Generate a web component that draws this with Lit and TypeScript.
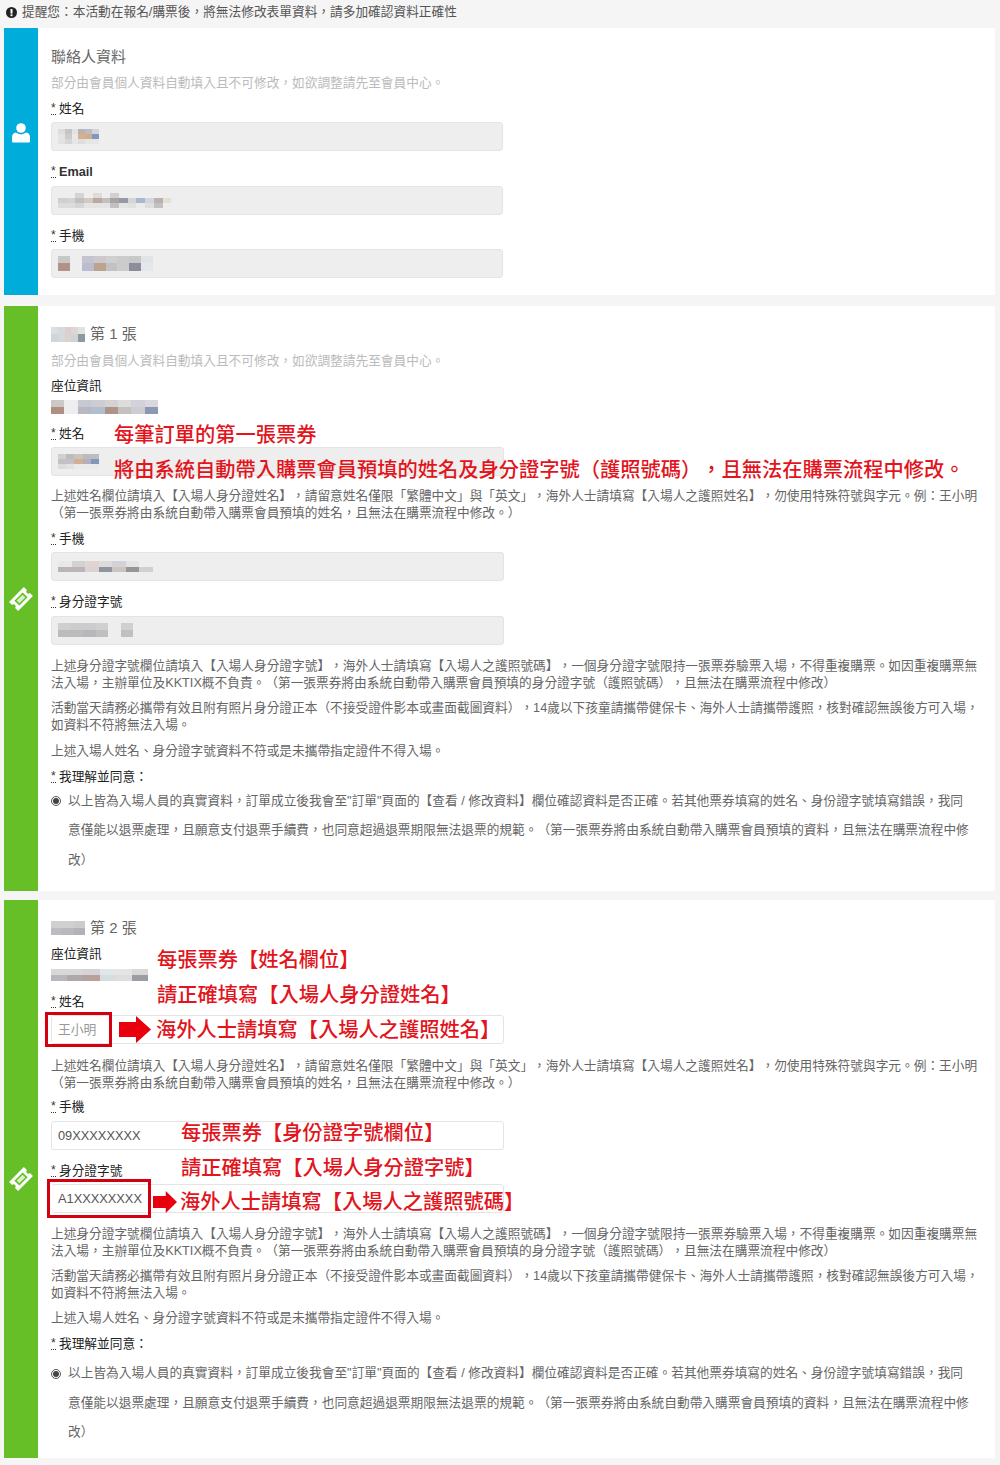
import { LitElement, html, css, svg } from "lit";
import { customElement } from "lit/decorators.js";

type Cells = string[][];

const M = {
  name1: [["#dcdcdc","#c4c4c4","#e2e2e2","#b8b4b2","#bcbcc2","#d4d4d4"],["#e4e4e4","#cccccc","#e8e8e8","#d8b08c","#ccae90","#7f98c0"],["#e2e2e2","#d6d6d6","#e6e6e6","#dedede","#e6e6e6","#e6e6e6"]],
  email: [["#eeeeee","#eeeeee","#d4d4d4","#eeeeee","#e2dad4","#eeeeee","#d0d0d0","#eeeeee","#eeeeee","#eeeeee","#eeeeee","#eeeeee","#eeeeee","#eeeeee"],["#cfcfcf","#d4d4d4","#c4bfbd","#d4c8c2","#b8aaa2","#c4bebe","#a8a4a4","#9898a2","#d4d4d4","#a8b8cc","#d0d6da","#b8b2b2","#e4dfd0","#eaeef0"],["#dcdcdc","#dcdcdc","#d4d4d4","#e4e4e4","#e4e4e4","#e4e4e4","#c4c0c0","#e4e4e4","#e0e0e0","#ebebeb","#dedede","#c4c0c0","#eeeeee","#eeeeee"]],
  phone: [["#c8c8c8","#eeeeee","#c4c4ce","#ccc8cc","#d0d0d0","#cccccc","#c8c8c8","#e0e4e4"],["#ae9484","#eeeeee","#bcbcd0","#bca390","#c4c0c4","#cccccc","#8c8c9a","#e4e8ea"]],
  title1: [["#dcdfe2","#d6dadc","#dccfcc","#ded6d4","#e2e2e2"],["#ccd6dc","#d4dadc","#d8d2d0","#d2d2d2","#8c98a2"]],
  seat1: [["#ccc8c6","#eeeeee","#c8c8d2","#ccccd2","#d6d2d2","#dcdcdc","#d2d2da","#d8d8de"],["#ae8f82","#eeeeee","#b8b8c2","#b0bed0","#ac9488","#c4c0be","#ccccd2","#8a98b4"]],
  name2: [["#d0d0d0","#bcbcbc","#cac4c0","#bcbaba","#bcbcc2"],["#c4c0c4","#c4c0ca","#d4ae92","#b0b0c0","#7e98bc"],["#dcdcdc","#e2e2e2","#eaeaea","#eaeaea","#eaeaea"]],
  phone2: [["#e8e8e8","#d2d2d2","#e2d4d0","#dcdcdc","#d2d2d8","#e4e4e4","#eeeeee"],["#bcb4b8","#bcb4b8","#d8d4d4","#90949e","#ccc4c0","#989494","#d0d0d4"]],
  id2: [["#cfcfcf","#cccccc","#cccccc","#d0d0d0","#eeeeee","#d0d0d0"],["#bcbcc0","#bcbcbc","#b8b8bc","#c0c0c0","#eeeeee","#c0c0c4"]],
  title2: [["#d0d0d0","#d0d0d0","#cccccc"],["#bcbcc2","#b8b8be","#b2b2b8"]],
  seat2: [["#d8d8d8","#d8d8d8","#d4d4d4","#e2e6e8","#e4e4e4","#d8d8d8"],["#b8b8bc","#aca8ac","#b8a09c","#d4dee2","#dedede","#9c9ca6"]],
} as Record<string, Cells>;

const HELP_NAME = "上述姓名欄位請填入【入場人身分證姓名】，請留意姓名僅限「繁體中文」與「英文」，海外人士請填寫【入場人之護照姓名】，勿使用特殊符號與字元。例：王小明（第一張票券將由系統自動帶入購票會員預填的姓名，且無法在購票流程中修改。）";
const HELP_ID = "上述身分證字號欄位請填入【入場人身分證字號】，海外人士請填寫【入場人之護照號碼】，一個身分證字號限持一張票券驗票入場，不得重複購票。如因重複購票無法入場，主辦單位及KKTIX概不負責。（第一張票券將由系統自動帶入購票會員預填的身分證字號（護照號碼），且無法在購票流程中修改）";
const HELP_DAY = "活動當天請務必攜帶有效且附有照片身分證正本（不接受證件影本或畫面截圖資料），14歲以下孩童請攜帶健保卡、海外人士請攜帶護照，核對確認無誤後方可入場，如資料不符將無法入場。";
const HELP_DENY = "上述入場人姓名、身分證字號資料不符或是未攜帶指定證件不得入場。";
const AGREE = "以上皆為入場人員的真實資料，訂單成立後我會至\"訂單\"頁面的【查看 / 修改資料】欄位確認資料是否正確。若其他票券填寫的姓名、身份證字號填寫錯誤，我同意僅能以退票處理，且願意支付退票手續費，也同意超過退票期限無法退票的規範。（第一張票券將由系統自動帶入購票會員預填的資料，且無法在購票流程中修改）";
const SUB = "部分由會員個人資料自動填入且不可修改，如欲調整請先至會員中心。";

const userIcon = svg`<svg class="ico-user" viewBox="0 0 18 20"><circle cx="9" cy="5" r="4.8" fill="#fff"/><path d="M1 19.6Q0 19.6 0 18V14.5Q0 10.2 4 9.6Q6 11.4 9 11.4T14 9.6Q18 10.2 18 14.5V18Q18 19.6 17 19.6Z" fill="#fff"/></svg>`;
const ticketIcon = svg`<svg class="ico-ticket" viewBox="0 0 24 24"><g transform="rotate(-45 12 12)"><path fill="#fff" d="M3 6.5H21V10.2A1.8 1.8 0 0 0 21 13.8V17.5H3V13.8A1.8 1.8 0 0 0 3 10.2Z"/><rect x="7" y="9" width="10" height="6" fill="#66bf26"/><rect x="8.4" y="10.3" width="7.2" height="3.4" fill="#d8efc8"/></g></svg>`;
const arrow = svg`<svg viewBox="0 0 32 27" preserveAspectRatio="none"><path fill="#e8000d" d="M0 6H17V0L32 13.5L17 27V21H0Z"/></svg>`;

@customElement("app-root")
export class AppRoot extends LitElement {
  static styles = css`
    :host { display: block; width: 1000px; height: 1465px; background: #f5f5f5; overflow: hidden;
      font-family: "Liberation Sans", "Noto Sans CJK TC", sans-serif; font-size: 12.7px; line-height: 17px; color: #666; text-spacing-trim: space-all; }
    .notice { height: 28px; display: flex; align-items: center; gap: 5px; padding-left: 6px; box-sizing: border-box; color: #555; padding-bottom: 4px; }
    .notice svg { width: 11px; height: 11px; flex: none; }
    .cards { display: flex; flex-direction: column; margin: 0 5px 0 4px; }
    .card { position: relative; display: flex; background: #fff; }
    .c1 { height: 267px; margin-bottom: 11px; }
    .c2 { height: 585px; margin-bottom: 9px; }
    .c3 { height: 558px; }
    .side { width: 34px; flex: none; display: flex; align-items: center; justify-content: center; background: #66bf26; }
    .c1 .side { background: #00acd9; padding-bottom: 58px; box-sizing: border-box; }
    .ico-user { width: 18px; height: 20px; }
    .ico-ticket { width: 28px; height: 28px; }
    .body { flex: 1; min-width: 0; padding: 18px 15px 0 13px; }
    .c1 .body { padding-top: 19px; }
    .title { display: flex; align-items: center; gap: 5px; height: 20px; font-size: 15px; line-height: 20px; color: #666; }
    .sub { margin-top: 9px; margin-bottom: -1px; color: #bbb; }
    .c1 .sub { margin-top: 8px; }
    .lab { height: 17px; box-sizing: border-box; padding-top: 1px; color: #222; white-space: nowrap; }
    .seat { padding-top: 0; }
    .en { font-weight: 700; color: #333; }
    .seat { margin-top: 8.5px; }
    .c3 .seat { margin-top: 7.5px; }
    .req { display: inline-block; width: 5px; height: 11px; line-height: 11px; border-bottom: 1px dotted #333; margin-right: 3px; font-size: 12px; vertical-align: 1px; color: #333; }
    .field { margin-bottom: 12px; }
    .field .lab { margin-bottom: 5.5px; }
    .inp { width: 452px; height: 29px; box-sizing: border-box; border: 1px solid #e4e4e4; border-radius: 3px; background: #eee; display: flex; align-items: center; padding-left: 6px; font-size: 12.8px; color: #555; }
    .wide { width: 453px; }
    .open { background: #fff; }
    .ph { color: #999; }
    .first { margin-top: 8.5px; }
    .seatbox { margin-top: 5.5px; margin-bottom: 10.5px; }
    .c3 .seatbox { margin-top: 6.5px; margin-bottom: 11.5px; }
    p { margin: 0 0 8.5px; }
    .h-name { margin-bottom: 7.5px; }
    .h-id { margin-top: 13px; }
    .c3 p { margin-bottom: 8px; }
    .c3 .h-name { margin-top: 14px; margin-bottom: 6px; }
    .c3 .h-id { margin-top: 13px; }
    .agree { display: flex; gap: 7px; margin-top: 1.5px; }
    .c3 .agree { margin-top: 7px; }
    .agree .txt { width: 901px; line-height: 29.5px; }
    .radio { flex: none; width: 10px; height: 10px; box-sizing: border-box; border: 1px solid #555; border-radius: 50%; margin-top: 9.5px; display: flex; align-items: center; justify-content: center; }
    .radio i { width: 6px; height: 6px; border-radius: 50%; background: #444; }
    .mosaic { display: flex; flex-direction: column; filter: blur(0.5px); }
    .mosaic div { flex: 1; display: flex; }
    .mosaic span { flex: 1; }
    .m-name { width: 41px; height: 16px; margin-top: 0; }
    .m-mail { width: 122px; height: 15px; margin-top: 1px; }
    .m-phone { width: 95px; height: 15px; margin-top: -1px; }
    .m-title1 { width: 34px; height: 15px; }
    .m-seat1 { width: 107px; height: 14px; }
    .m-phone2 { width: 95px; height: 11px; }
    .m-id2 { width: 75px; height: 14px; }
    .m-title2 { width: 34px; height: 14px; }
    .m-seat2 { width: 97px; height: 12px; }
    .note { position: absolute; white-space: nowrap; font-size: 20.25px; line-height: 28px; color: #e2141c; font-weight: 500; }
    .n1 { left: 110px; top: 115px; }
    .n2 { left: 110px; top: 150px; }
    .n3 { left: 153px; top: 46px; }
    .n4 { left: 153px; top: 81px; }
    .n5 { left: 152px; top: 116px; }
    .n6 { left: 177px; top: 219px; }
    .n7 { left: 177px; top: 254px; }
    .n8 { left: 176px; top: 288px; }
    .box { position: absolute; box-sizing: border-box; border: 3px solid #d5000f; outline: 1px solid #fff; outline-offset: -5px; }
    .b1 { left: 41px; top: 112px; width: 67px; height: 35px; }
    .b2 { left: 43px; top: 279px; width: 104px; height: 39px; }
    .arr { position: absolute; display: block; }
    .arr svg { display: block; width: 100%; height: 100%; }
    .a1 { left: 115px; top: 116px; width: 32px; height: 27px; }
    .a2 { left: 149px; top: 291px; width: 24px; height: 22px; }
  `;

  private mosaic(cells: Cells, cls: string) {
    return html`<div class="mosaic ${cls}">${cells.map(r => html`<div>${r.map(c => html`<span style="background:${c}"></span>`)}</div>`)}</div>`;
  }

  private lab(t: unknown) {
    return html`<div class="lab"><span class="req">*</span>${t}</div>`;
  }

  private field(t: unknown, content: unknown, cls = "") {
    return html`<div class="field">${this.lab(t)}<div class="inp ${cls}">${content}</div></div>`;
  }

  private tail() {
    return html`
      <p class="h-id">${HELP_ID}</p>
      <p>${HELP_DAY}</p>
      <p>${HELP_DENY}</p>
      ${this.lab("我理解並同意：")}
      <div class="agree"><span class="radio"><i></i></span><div class="txt">${AGREE}</div></div>`;
  }

  render() {
    return html`
      <div class="notice">
        <svg viewBox="0 0 12 12"><circle cx="6" cy="6" r="6" fill="#222"/><rect x="4.9" y="2.2" width="2.2" height="5" fill="#fff"/><rect x="4.9" y="8" width="2.2" height="2" fill="#fff"/></svg>
        <span>提醒您：本活動在報名/購票後，將無法修改表單資料，請多加確認資料正確性</span>
      </div>
      <div class="cards">
        <section class="card c1">
          <div class="side">${userIcon}</div>
          <div class="body">
            <div class="title">聯絡人資料</div>
            <div class="sub">${SUB}</div>
            <div class="first"></div>
            ${this.field("姓名", this.mosaic(M.name1, "m-name"))}
            ${this.field(html`<span class="en">Email</span>`, this.mosaic(M.email, "m-mail"))}
            ${this.field("手機", this.mosaic(M.phone, "m-phone"))}
          </div>
        </section>

        <section class="card c2">
          <div class="side">${ticketIcon}</div>
          <div class="body">
            <div class="title">${this.mosaic(M.title1, "m-title1")}<span>第 1 張</span></div>
            <div class="sub">${SUB}</div>
            <div class="lab seat">座位資訊</div>
            <div class="seatbox">${this.mosaic(M.seat1, "m-seat1")}</div>
            ${this.field("姓名", this.mosaic(M.name2, "m-name"), "wide")}
            <p class="h-name">${HELP_NAME}</p>
            ${this.field("手機", this.mosaic(M.phone2, "m-phone2"), "wide")}
            ${this.field("身分證字號", this.mosaic(M.id2, "m-id2"), "wide")}
            ${this.tail()}
          </div>
          <div class="note n1">每筆訂單的第一張票券</div>
          <div class="note n2">將由系統自動帶入購票會員預填的姓名及身分證字號（護照號碼），且無法在購票流程中修改。</div>
        </section>

        <section class="card c3">
          <div class="side">${ticketIcon}</div>
          <div class="body">
            <div class="title">${this.mosaic(M.title2, "m-title2")}<span>第 2 張</span></div>
            <div class="lab seat">座位資訊</div>
            <div class="seatbox">${this.mosaic(M.seat2, "m-seat2")}</div>
            ${this.field("姓名", html`<span class="ph">王小明</span>`, "wide open")}
            <p class="h-name">${HELP_NAME}</p>
            ${this.field("手機", "09XXXXXXXX", "wide open")}
            ${this.field("身分證字號", "A1XXXXXXXX", "wide open")}
            ${this.tail()}
          </div>
          <div class="box b1"></div>
          <div class="box b2"></div>
          <span class="arr a1">${arrow}</span>
          <span class="arr a2">${arrow}</span>
          <div class="note n3">每張票券【姓名欄位】</div>
          <div class="note n4">請正確填寫【入場人身分證姓名】</div>
          <div class="note n5">海外人士請填寫【入場人之護照姓名】</div>
          <div class="note n6">每張票券【身份證字號欄位】</div>
          <div class="note n7">請正確填寫【入場人身分證字號】</div>
          <div class="note n8">海外人士請填寫【入場人之護照號碼】</div>
        </section>
      </div>
    `;
  }
}
